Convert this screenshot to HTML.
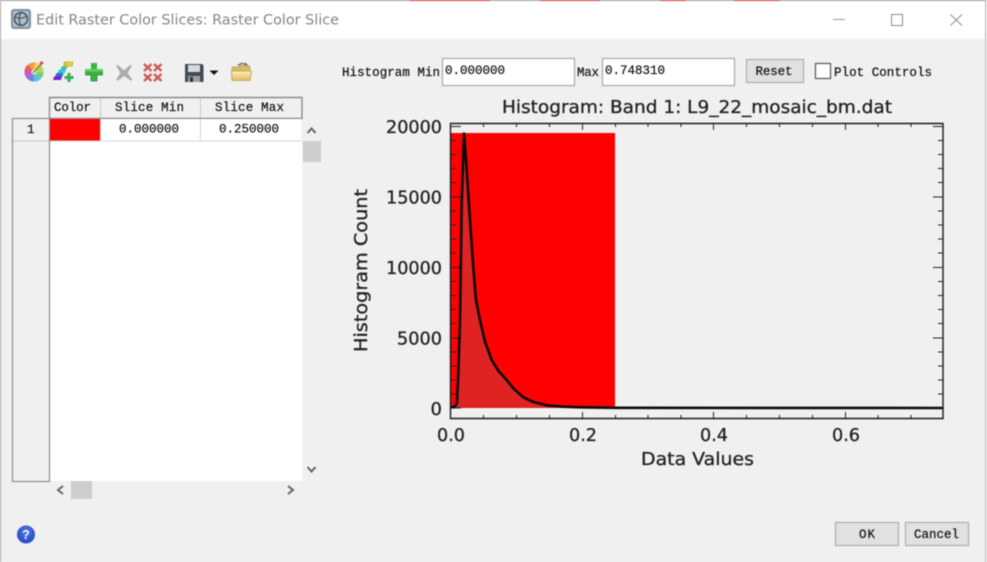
<!DOCTYPE html>
<html>
<head>
<meta charset="utf-8">
<style>
html,body{margin:0;padding:0;width:987px;height:562px;overflow:hidden;background:#f0f0f0}
svg{display:block;position:absolute;left:0;top:0;filter:blur(.4px)}
.m{font-family:"Liberation Mono",monospace;font-size:12.5px;fill:#111;stroke:#111;stroke-width:.2}
.c{font-family:"DejaVu Sans","Liberation Sans",sans-serif;fill:#222;stroke:#222;stroke-width:.3}
</style>
</head>
<body>
<svg width="987" height="562" viewBox="0 0 987 562" xmlns="http://www.w3.org/2000/svg">
<!-- window -->
<rect width="987" height="562" fill="#f0f0f0"/>
<rect width="987" height="39" fill="#fff"/>
<rect x="0" y="0" width="987" height="1" fill="#9a9a9a"/>
<rect x="410" y="0" width="80" height="1" fill="#d03030"/>
<rect x="540" y="0" width="60" height="1" fill="#d03030"/>
<rect x="660" y="0" width="26" height="1" fill="#d03030"/>
<rect x="734" y="0" width="46" height="1" fill="#d03030"/>
<rect x="0" y="0" width="1" height="562" fill="#a8a8a8"/>
<rect x="985" y="0" width="1" height="562" fill="#b8b8b8"/>
<rect x="986" y="0" width="1" height="562" fill="#f4f4f4"/>

<!-- title icon -->
<rect x="11" y="9" width="20" height="20" rx="3" fill="#7d909f"/>
<rect x="13" y="11" width="16" height="16" rx="2" fill="#b4c1cb"/>
<circle cx="21" cy="19" r="6.5" fill="none" stroke="#465562" stroke-width="1.6"/>
<path d="M15 17Q21 20 27 16M21 12.5Q17 19 21 25.5" fill="none" stroke="#465562" stroke-width="1.2"/>
<text x="36" y="24.500" font-family="'DejaVu Sans','Liberation Sans',sans-serif" font-size="14.500" fill="#858585" textLength="303" lengthAdjust="spacingAndGlyphs">Edit Raster Color Slices: Raster Color Slice</text>

<!-- window controls -->
<rect x="833" y="19" width="12" height="1" fill="#9a9a9a"/>
<rect x="891.500" y="14.500" width="11" height="11" fill="none" stroke="#8c8c8c"/>
<path d="M950.500 14.500L962 25.500M962 14.500L950.500 25.500" stroke="#8c8c8c" fill="none"/>

<!-- toolbar icons -->
<defs>
<linearGradient id="folder" x1="0" y1="0" x2="0" y2="1">
<stop offset="0" stop-color="#fdeeb8"/><stop offset="1" stop-color="#e2bb6a"/>
</linearGradient>
</defs>
<!-- colour wheel -->
<circle cx="34" cy="72" r="9.500" fill="#bbb"/>
<g fill="none" stroke-width="7.500" stroke-dasharray="4.8 32.900">
<circle cx="34" cy="72" r="5.800" stroke="#f7d24a" transform="rotate(-90 34 72)"/>
<circle cx="34" cy="72" r="5.800" stroke="#f29a4a" transform="rotate(-135 34 72)"/>
<circle cx="34" cy="72" r="5.800" stroke="#e85a6c" transform="rotate(-180 34 72)"/>
<circle cx="34" cy="72" r="5.800" stroke="#c25ac8" transform="rotate(-225 34 72)"/>
<circle cx="34" cy="72" r="5.800" stroke="#7a7ce0" transform="rotate(-270 34 72)"/>
<circle cx="34" cy="72" r="5.800" stroke="#58c0e0" transform="rotate(-315 34 72)"/>
<circle cx="34" cy="72" r="5.800" stroke="#6fd08a" transform="rotate(0 34 72)"/>
<circle cx="34" cy="72" r="5.800" stroke="#b4dc5a" transform="rotate(-45 34 72)"/>
</g>
<circle cx="34" cy="72" r="2.600" fill="#eee8d8"/>
<path d="M33 73L42 63.500" stroke="#8a7a5a" stroke-width="1.500"/>
<rect x="40" y="61.500" width="3" height="3" fill="#e0405a" transform="rotate(45 41.500 63)"/>

<!-- stairs + plus -->
<path d="M64 62h9l-1 4h-4.500l-.5 1.500h-4l1-2.500h2l.3-1h-2.300z" fill="#e6d626" stroke="#8d8620" stroke-width=".5"/>
<path d="M61.500 66.500h5.500l-1 3.500h-5.500z" fill="#35c88a"/>
<path d="M59 69.500h7l-1 3.500h-7.500z" fill="#35c8e0"/>
<path d="M56.500 73h7l-1 3.500h-7.500z" fill="#2a6fe0"/>
<path d="M54 76.500h8l-1 3.500h-8z" fill="#7a22c8"/>
<path d="M67.500 73h3v3h3v3h-3v3h-3v-3h-3v-3h3z" fill="#35b04a"/>

<!-- plus -->
<path d="M91 63h6v6h6v6h-6v6h-6v-6h-6v-6h6z" fill="#3cb043"/>
<path d="M85 69h18v2.500h-18z" fill="#66cc66"/>
<path d="M85 75h6v6h6v-6h6" fill="none" stroke="#1f8a2c" stroke-width=".8"/>

<!-- delete -->
<path d="M117 65.500l7 6 7-6-4.500 7.500 5 7-7.500-5-7 5 4.500-7z" fill="#b0b0b0" stroke="#aaa" stroke-width="1.800"/>

<!-- delete all -->
<g stroke="#d05858" stroke-width="2.400" fill="none">
<path d="M144 64l7.500 7M151.500 64l-7.500 7M154 64l7.500 7M161.500 64l-7.500 7M144 74l7.500 7M151.500 74l-7.500 7M154 74l7.500 7M161.500 74l-7.500 7"/>
</g>

<!-- save -->
<path d="M185 64h17l1.500 1.500v16.500h-18.500z" fill="#454b53"/>
<rect x="188" y="65" width="12" height="7" fill="#d4d9de"/>
<rect x="188" y="76" width="12" height="6" fill="#9aa1a8"/>
<rect x="190" y="77" width="3" height="5" fill="#30353a"/>
<path d="M209.500 70.500h9l-4.500 4.500z" fill="#111"/>

<!-- open folder -->
<path d="M232 80v-13h7l1.500-1.500h8l1.500 1.500v13z" fill="#dcb766" stroke="#c09a4a" stroke-width=".7"/>
<path d="M232 80.500l-.5-9.500h20l-1.500 9.500z" fill="url(#folder)" stroke="#c09a4a" stroke-width=".8"/>
<path d="M238 65.500q4-3.500 8-.8" fill="none" stroke="#66788a" stroke-width="1.500"/>
<path d="M245.500 62.300l2.500 3-3.800.5z" fill="#66788a"/>

<!-- table -->
<rect x="49" y="141" width="253" height="340" fill="#fff"/>
<rect x="49" y="97.500" width="253" height="21" fill="#f0f0f0"/>
<rect x="12.500" y="118.500" width="37" height="363" fill="#f0f0f0" stroke="#8c8c8c" stroke-width="1.200"/>
<path d="M49.500 97.500H302V118.500H49.500Z" fill="none" stroke="#8c8c8c" stroke-width="1.400"/>
<path d="M100.500 98V118M200.500 98V118" stroke="#c8c8c8"/>
<path d="M13 141H49" stroke="#c8c8c8"/>
<rect x="50" y="119" width="50" height="21.500" fill="#ff0000"/>
<rect x="101" y="119" width="200" height="21.500" fill="#fff"/>
<path d="M100.500 119V141M200.500 119V141M50 141H301" stroke="#d4d4d4"/>
<text class="m" x="54" y="111" textLength="37">Color</text>
<text class="m" x="115" y="111" textLength="69">Slice Min</text>
<text class="m" x="215" y="111" textLength="69">Slice Max</text>
<text class="m" x="27" y="133" font-size="12">1</text>
<text class="m" x="119" y="132.500" textLength="60">0.000000</text>
<text class="m" x="219" y="132.500" textLength="60">0.250000</text>

<!-- scrollbars -->
<path d="M307.500 133l4-4.500 4 4.500M307.500 467l4 4.500 4-4.500" fill="none" stroke="#666" stroke-width="2"/>
<rect x="303" y="141" width="18" height="21" fill="#cdcdcd"/>
<path d="M63 486l-5 4 5 4M288 486l5 4-5 4" fill="none" stroke="#666" stroke-width="2"/>
<rect x="71" y="481" width="21" height="18" fill="#cdcdcd"/>

<!-- help -->
<circle cx="26" cy="534.500" r="9" fill="#2e56cc"/>
<circle cx="26" cy="532" r="6.500" fill="#4e76e0" opacity=".5"/>
<text x="26" y="539" text-anchor="middle" font-family="'Liberation Sans',sans-serif" font-weight="bold" font-size="12.500" fill="#fff">?</text>

<!-- histogram controls -->
<text class="m" x="342" y="76" textLength="98">Histogram Min</text>
<rect x="442.500" y="58.500" width="132" height="27" fill="#fff" stroke="#a8a8a8" stroke-width="1.200"/>
<text class="m" x="445" y="74" textLength="60">0.000000</text>
<text class="m" x="577" y="76" textLength="22">Max</text>
<rect x="602.500" y="58.500" width="132" height="27" fill="#fff" stroke="#a8a8a8" stroke-width="1.200"/>
<text class="m" x="605" y="74" textLength="60">0.748310</text>
<rect x="746.500" y="59.500" width="57" height="23" fill="#e1e1e1" stroke="#adadad" stroke-width="1.200"/>
<text class="m" x="755.500" y="75" textLength="37">Reset</text>
<rect x="815.500" y="63.500" width="15" height="15" fill="#fff" stroke="#555" stroke-width="1.200"/>
<text class="m" x="834" y="76" textLength="98">Plot Controls</text>

<!-- plot -->
<rect x="451" y="133" width="164" height="275" fill="#ff0000"/>
<path d="M451 407.500L454 406.700L457 404L458.300 380L460 320L461.700 203L464 133.500L466 160L470 220L475 290L480 320L485 341.700L491.700 360L498.300 370.700L506.700 380L513.300 388.300L523.300 397.300L533.300 402L546.700 405.300L563 406.700L580 407.300L615 408L615 408L451 408Z" fill="#df2222"/>
<!-- axes -->
<path d="M450.500 123.500H943V418.500H450.500Z" fill="none" stroke="#1a1a1a" stroke-width="1.400"/>
<g stroke="#222" stroke-width="1" fill="none">
<path d="M451 126.500H461M451 197H461M451 267.500H461M451 338H461M451 408H461"/>
<path d="M943 126.500H933M943 197H933M943 267.500H933M943 338H933M943 408H933"/>
<path d="M451 140.500H456M451 154.500H456M451 168.500H456M451 182.500H456M451 211H456M451 225H456M451 239H456M451 253H456M451 281.500H456M451 295.500H456M451 309.500H456M451 323.500H456M451 352H456M451 366H456M451 380H456M451 394H456"/>
<path d="M943 140.500H938M943 154.500H938M943 168.500H938M943 182.500H938M943 211H938M943 225H938M943 239H938M943 253H938M943 281.500H938M943 295.500H938M943 309.500H938M943 323.500H938M943 352H938M943 366H938M943 380H938M943 394H938"/>
<path d="M582.500 418V412M713.500 418V412M845.500 418V412M582.500 124V130M713.500 124V130M845.500 124V130"/>
<path d="M483.500 418V415M516.500 418V415M549.500 418V415M615.500 418V415M648 418V415M681 418V415M746.500 418V415M779.500 418V415M812.500 418V415M878 418V415M911 418V415"/>
<path d="M483.500 124V127M516.500 124V127M549.500 124V127M615.500 124V127M648 124V127M681 124V127M746.500 124V127M779.500 124V127M812.500 124V127M878 124V127M911 124V127"/>
</g>
<!-- curve -->
<path d="M451 407.500L454 406.700Q456.500 406 457 402L458.300 373L460 320L461.700 203L464 133.500L466 160L470 220L473.500 270L476 300L480 320L485 341.700L491.700 360L498.300 370.700L506.700 380L513.300 388.300L523.300 397.300L533.300 402L546.700 405.300L563 406.700L580 407.300L615 407.800L943 408" fill="none" stroke="#0a0a0a" stroke-width="2.600" stroke-linejoin="round"/>

<!-- chart text -->
<text class="c" x="502" y="113" font-size="18" textLength="390" lengthAdjust="spacingAndGlyphs">Histogram: Band 1: L9_22_mosaic_bm.dat</text>
<text class="c" x="442" y="133" text-anchor="end" font-size="18" textLength="56" lengthAdjust="spacingAndGlyphs">20000</text>
<text class="c" x="442" y="203.500" text-anchor="end" font-size="18" textLength="56" lengthAdjust="spacingAndGlyphs">15000</text>
<text class="c" x="442" y="274" text-anchor="end" font-size="18" textLength="56" lengthAdjust="spacingAndGlyphs">10000</text>
<text class="c" x="442" y="344.500" text-anchor="end" font-size="18" textLength="45" lengthAdjust="spacingAndGlyphs">5000</text>
<text class="c" x="442" y="415" text-anchor="end" font-size="18">0</text>
<text class="c" x="437" y="441" font-size="17.500" textLength="28" lengthAdjust="spacingAndGlyphs">0.0</text>
<text class="c" x="569" y="441" font-size="17.500" textLength="28" lengthAdjust="spacingAndGlyphs">0.2</text>
<text class="c" x="700" y="441" font-size="17.500" textLength="28" lengthAdjust="spacingAndGlyphs">0.4</text>
<text class="c" x="832" y="441" font-size="17.500" textLength="28" lengthAdjust="spacingAndGlyphs">0.6</text>
<text class="c" x="641" y="465" font-size="18" textLength="113" lengthAdjust="spacingAndGlyphs">Data Values</text>
<text class="c" transform="translate(367 352) rotate(-90)" font-size="18" textLength="163" lengthAdjust="spacingAndGlyphs">Histogram Count</text>

<!-- buttons -->
<rect x="835.500" y="522.500" width="63" height="23" fill="#e1e1e1" stroke="#adadad" stroke-width="1.200"/>
<text class="m" x="859" y="538" textLength="16">OK</text>
<rect x="905.500" y="522.500" width="63" height="23" fill="#e1e1e1" stroke="#adadad" stroke-width="1.200"/>
<text class="m" x="914" y="538" textLength="45">Cancel</text>
</svg>
</body>
</html>
